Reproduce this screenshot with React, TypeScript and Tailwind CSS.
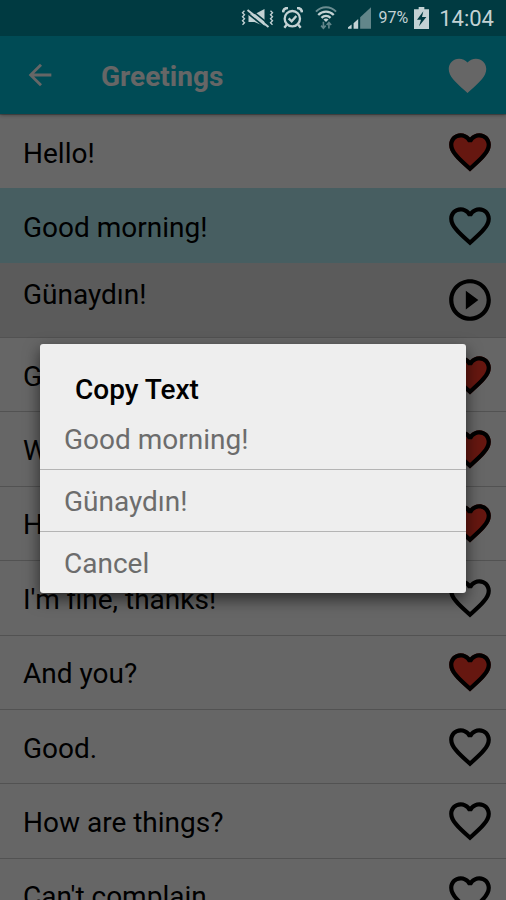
import { useState } from "react";
import { MdArrowBack, MdFavorite, MdFavoriteBorder, MdPlayCircleOutline } from "react-icons/md";

type Phrase = {
  text: string;
  favorite?: boolean;
  selected?: boolean;
  translation?: string;
};

const PHRASES: Phrase[] = [
  { text: "Hello!", favorite: true },
  { text: "Good morning!", selected: true, translation: "Günaydın!" },
  { text: "Good evening!", favorite: true },
  { text: "Welcome!", favorite: true },
  { text: "How are you?", favorite: true },
  { text: "I'm fine, thanks!" },
  { text: "And you?", favorite: true },
  { text: "Good." },
  { text: "How are things?" },
  { text: "Can't complain." },
];

const COPY_OPTIONS = ["Good morning!", "Günaydın!", "Cancel"];

function MuteIcon() {
  return (
    <svg viewBox="0 0 98 57" className="h-[19px] w-[33px]" fill="none" stroke="currentColor">
      <path d="M10 5 4 11l6 6-6 6 6 6-6 6 6 6-6 6M88 5l6 6-6 6 6 6-6 6 6 6-6 6 6 6" strokeWidth="4" />
      <path d="M22 16h18L70 0v52L40 39H22z" fill="currentColor" stroke="none" />
      <path d="M12 7 78 60" stroke="#003a41" strokeWidth="5" />
      <path d="M26 0 88 49" stroke="#003a41" strokeWidth="5" />
      <path d="M19 3 82 54" strokeWidth="6" />
    </svg>
  );
}

function AlarmIcon() {
  return (
    <svg viewBox="0 0 63 66" className="h-[22px] w-[21px]" fill="none" stroke="currentColor" strokeWidth="7">
      <circle cx="31" cy="35" r="23" />
      <path d="M20 34l9 9 14-16" />
      <path d="M3 16C4 8 10 3 18 3M60 16C59 8 53 3 45 3" strokeWidth="8" />
      <path d="M14 53 7 62M49 53l7 9" />
    </svg>
  );
}

function WifiIcon() {
  return (
    <svg viewBox="0 0 68 73" className="h-6 w-[22px]" fill="none" stroke="currentColor">
      <path d="M3 17C20-1 48-1 65 17" strokeWidth="6" opacity="0.55" />
      <path d="M10 27c14-14 34-14 48 0M20 36c8-8 20-8 28 0" strokeWidth="7" />
      <path d="M26 41c5-4 11-4 16 0l-8 8z" fill="currentColor" stroke="none" />
      <path d="M26 48v19M19 60l7 8 7-8M43 69V50M36 58l7-8 7 8" strokeWidth="5" opacity="0.5" />
    </svg>
  );
}

function SignalIcon() {
  return (
    <svg viewBox="0 0 70 66" className="h-[22px] w-[23px]" fill="currentColor">
      <path d="M37 31 70 0v66H37z" opacity="0.5" />
      <path d="M0 66v-5l11-8v13zM17 66V49l14-13v30z" />
    </svg>
  );
}

function BatteryIcon() {
  return (
    <svg viewBox="0 0 45 66" className="h-[22px] w-[15px]">
      <path d="M14 0h17v7h14v59H0V7h14z" fill="currentColor" />
      <path d="M28 13 9 38h12l-6 20 22-28H24z" fill="#003a41" />
    </svg>
  );
}

function StatusBar() {
  return (
    <div className="relative z-20 flex h-9 items-center justify-end bg-[#003a41] pr-3 text-[#c3d2d4]">
      <div className="flex items-center gap-2">
        <MuteIcon />
        <AlarmIcon />
      </div>
      <div className="ml-3 flex items-center gap-[11px]">
        <WifiIcon />
        <SignalIcon />
      </div>
      <div className="ml-2 flex items-center gap-1.5">
        <span className="text-base">97%</span>
        <BatteryIcon />
      </div>
      <span className="ml-2.5 text-[22px]">14:04</span>
    </div>
  );
}

function Heart({ filled }: { filled?: boolean }) {
  return (
    <span className="grid size-[50px] place-items-center *:col-start-1 *:row-start-1">
      {filled && <MdFavorite className="size-[50px] text-[#ff3b2a]" />}
      <MdFavoriteBorder className="size-[50px] text-black" />
    </span>
  );
}

function PhraseRow({ phrase }: { phrase: Phrase }) {
  return (
    <>
      <li
        className={
          phrase.selected
            ? "flex items-center justify-between border-t border-[#b2ebf2] bg-[#b2ebf2] pr-[11px] pl-[23px]"
            : "flex items-center justify-between border-t border-[#cccccc] pr-[11px] pl-[23px]"
        }
      >
        <span className="pt-1">{phrase.text}</span>
        <button aria-label={`Favorite ${phrase.text}`}>
          <Heart filled={phrase.favorite} />
        </button>
      </li>
      {phrase.translation && (
        <li className="flex items-center justify-between border-t border-[#e4e4e4] bg-[#e4e4e4] pr-[11px] pl-[23px]">
          <span className="pb-2.5">{phrase.translation}</span>
          <button aria-label={`Play ${phrase.translation}`}>
            <MdPlayCircleOutline className="size-[50px]" />
          </button>
        </li>
      )}
    </>
  );
}

function CopyDialog({ onClose }: { onClose: () => void }) {
  return (
    <div className="absolute inset-0 z-10 grid items-center bg-black/60 px-10 pt-9">
      <div
        role="dialog"
        aria-modal="true"
        aria-labelledby="copy-title"
        className="rounded-[3px] bg-[#eeeeee] pt-7 shadow-[0_6px_16px_rgba(0,0,0,0.6)]"
      >
        <h2 id="copy-title" className="pl-[35px] text-[28px] leading-9 font-medium text-black">
          Copy Text
        </h2>
        <ul className="divide-y divide-[#b4b4b4]">
          {COPY_OPTIONS.map((option) => (
            <li key={option}>
              <button
                onClick={onClose}
                className="block w-full pt-3.5 pb-[11px] pl-6 text-left text-[28px] leading-9 text-[#6c6c6c]"
              >
                {option}
              </button>
            </li>
          ))}
        </ul>
      </div>
    </div>
  );
}

export default function App() {
  const [open, setOpen] = useState(true);

  return (
    <div className="relative h-screen overflow-hidden bg-white font-[Roboto,sans-serif] text-black">
      <StatusBar />
      <header className="relative flex h-[78px] items-center bg-[#00bcd4] pr-4 pl-[23px] text-white shadow-[0_1px_4px_rgba(0,0,0,0.4)]">
        <button aria-label="Back">
          <MdArrowBack className="size-[34px]" />
        </button>
        <h1 className="ml-11 flex-1 pt-1 text-[28px] font-bold">Greetings</h1>
        <button aria-label="Favorites">
          <MdFavorite className="size-[45px]" />
        </button>
      </header>
      <ul className="grid min-h-[818px] auto-rows-fr text-[28px]">
        {PHRASES.map((phrase) => (
          <PhraseRow key={phrase.text} phrase={phrase} />
        ))}
      </ul>
      {open && <CopyDialog onClose={() => setOpen(false)} />}
    </div>
  );
}
